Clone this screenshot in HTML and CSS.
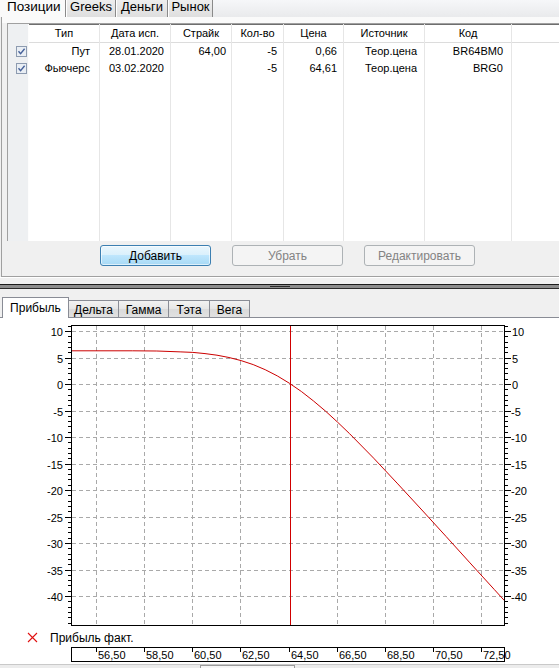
FILE: index.html
```html
<!DOCTYPE html>
<html lang="ru">
<head>
<meta charset="utf-8">
<title>Позиции</title>
<link rel="stylesheet" href="styles.css">
</head>
<body>
<div class="top-tabs">
  <div class="ttab active">Позиции</div>
  <div class="ttab w-greeks">Greeks</div>
  <div class="ttab w-money">Деньги</div>
  <div class="ttab w-market">Рынок</div>
</div>

<div class="panel">
  <div class="grid">
    <div class="col c-chk">
      <div class="hd"></div>
      <div class="cell"><svg class="chk" viewBox="0 0 11 11"><rect x="0.5" y="0.5" width="10" height="10" fill="#e9eef4" stroke="#8d9bb0"/><path d="M2.5 5.2 L4.6 7.6 L8.6 2.8" fill="none" stroke="#46619a" stroke-width="1.4"/></svg></div>
      <div class="cell"><svg class="chk" viewBox="0 0 11 11"><rect x="0.5" y="0.5" width="10" height="10" fill="#e9eef4" stroke="#8d9bb0"/><path d="M2.5 5.2 L4.6 7.6 L8.6 2.8" fill="none" stroke="#46619a" stroke-width="1.4"/></svg></div>
    </div>
    <div class="col c-type"><div class="hd">Тип</div><div class="cell">Пут</div><div class="cell">Фьючерс</div></div>
    <div class="col c-date"><div class="hd">Дата исп.</div><div class="cell">28.01.2020</div><div class="cell">03.02.2020</div></div>
    <div class="col c-strike"><div class="hd">Страйк</div><div class="cell">64,00</div><div class="cell"></div></div>
    <div class="col c-qty"><div class="hd">Кол-во</div><div class="cell">-5</div><div class="cell">-5</div></div>
    <div class="col c-price"><div class="hd">Цена</div><div class="cell">0,66</div><div class="cell">64,61</div></div>
    <div class="col c-src"><div class="hd">Источник</div><div class="cell">Теор.цена</div><div class="cell">Теор.цена</div></div>
    <div class="col c-code"><div class="hd">Код</div><div class="cell">BR64BM0</div><div class="cell">BRG0</div></div>
    <div class="col c-rest"><div class="hd"></div></div>
  </div>
  <div class="buttons">
    <button class="btn primary">Добавить</button>
    <button class="btn" disabled>Убрать</button>
    <button class="btn" disabled>Редактировать</button>
  </div>
</div>

<div class="splitter"><div class="bar"><span class="grip"></span></div></div>

<div class="btabs">
  <div class="btab active w-profit">Прибыль</div>
  <div class="btab w-delta">Дельта</div>
  <div class="btab w-gamma">Гамма</div>
  <div class="btab w-theta">Тэта</div>
  <div class="btab w-vega">Вега</div>
</div>

<div class="chart">
  <svg class="plot" width="559" height="346" viewBox="0 0 559 346">
    <defs>
      <g id="ticks">
        <path d="M65 13.5H71M65 40.5H71M65 66.5H71M65 93.5H71M65 119.5H71M65 146.5H71M65 172.5H71M65 199.5H71M65 225.5H71M65 252.5H71M65 278.5H71" stroke="#000"/>
        <path d="M68 8.5H71M68 18.5H71M68 24.5H71M68 29.5H71M68 34.5H71M68 45.5H71M68 50.5H71M68 55.5H71M68 61.5H71M68 71.5H71M68 77.5H71M68 82.5H71M68 87.5H71M68 98.5H71M68 103.5H71M68 108.5H71M68 114.5H71M68 124.5H71M68 130.5H71M68 135.5H71M68 140.5H71M68 151.5H71M68 156.5H71M68 161.5H71M68 167.5H71M68 177.5H71M68 183.5H71M68 188.5H71M68 193.5H71M68 204.5H71M68 209.5H71M68 214.5H71M68 220.5H71M68 230.5H71M68 236.5H71M68 241.5H71M68 246.5H71M68 257.5H71M68 262.5H71M68 267.5H71M68 273.5H71M68 283.5H71M68 289.5H71M68 294.5H71M68 299.5H71M68 305.5H71" stroke="#000"/>
      </g>
    </defs>
    <rect x="71.5" y="7.5" width="433" height="300" fill="#fff"/>
    <path class="grid-line" d="M72 13.5H504M72 40.5H504M72 66.5H504M72 93.5H504M72 119.5H504M72 146.5H504M72 172.5H504M72 199.5H504M72 225.5H504M72 252.5H504M72 278.5H504"/>
    <path class="grid-line" d="M96.5 8V307M144.5 8V307M192.5 8V307M240.5 8V307M337.5 8V307M385.5 8V307M433.5 8V307M481.5 8V307"/>
    <path class="red-line" d="M290.5 8V307"/>
    <polyline class="curve" points="72,32.8 132.7,32.8 156.8,33.0 180.9,33.9 192.9,34.4 205,35.6 217,37.2 229,39.5 241.1,42.6 253.2,46.6 265.2,51.7 277.3,57.9 289.3,65.2 301.4,73.5 313.4,82.9 325.5,93.1 337.5,104.1 349.6,115.7 373.7,140.2 397.8,165.9 421.9,192 446,218.4 470,244.9 494.2,271.4 504.5,282.7"/>
    <rect x="71.5" y="7.5" width="433" height="300" fill="none" stroke="#000"/>
    <use href="#ticks"/>
    <use href="#ticks" transform="translate(576 0) scale(-1 1)"/>
    <g class="lbl-left">
      <text x="63" y="17.5">10</text>
      <text x="63" y="44.5">5</text>
      <text x="63" y="70.5">0</text>
      <text x="63" y="97.5">-5</text>
      <text x="63" y="123.5">-10</text>
      <text x="63" y="150.5">-15</text>
      <text x="63" y="176.5">-20</text>
      <text x="63" y="203.5">-25</text>
      <text x="63" y="229.5">-30</text>
      <text x="63" y="256.5">-35</text>
      <text x="63" y="282.5">-40</text>
    </g>
    <g class="lbl-right">
      <text x="512" y="17.5">10</text>
      <text x="512" y="44.5">5</text>
      <text x="512" y="70.5">0</text>
      <text x="511" y="97.5">-5</text>
      <text x="511" y="123.5">-10</text>
      <text x="511" y="150.5">-15</text>
      <text x="511" y="176.5">-20</text>
      <text x="511" y="203.5">-25</text>
      <text x="511" y="229.5">-30</text>
      <text x="511" y="256.5">-35</text>
      <text x="511" y="282.5">-40</text>
    </g>
    <path class="legend-mark" d="M28 315L37 324M37 315L28 324"/>
    <text class="legend" x="50" y="323.5">Прибыль факт.</text>
    <rect x="71.5" y="329.5" width="433" height="14" fill="#fff" stroke="#000"/>
    <path d="M96.5 330V334M144.5 330V334M192.5 330V334M240.5 330V334M289.5 330V334M337.5 330V334M385.5 330V334M433.5 330V334M481.5 330V334" stroke="#000"/>
    <g class="lbl-x">
      <text x="98" y="341">56,50</text>
      <text x="146" y="341">58,50</text>
      <text x="194" y="341">60,50</text>
      <text x="242" y="341">62,50</text>
      <text x="291" y="341">64,50</text>
      <text x="339" y="341">66,50</text>
      <text x="387" y="341">68,50</text>
      <text x="435" y="341">70,50</text>
      <text x="483" y="341">72,50</text>
    </g>
  </svg>
</div>
<div class="hscroll"><span class="thumb"></span></div>
</body>
</html>
```

FILE: styles.css
```css
* { box-sizing: border-box; }
html, body { margin: 0; padding: 0; }
body {
  width: 559px;
  height: 668px;
  overflow: hidden;
  background: #f0f0f0;
  font-family: "Liberation Sans", Arial, sans-serif;
  font-size: 11px;
  color: #000;
}

/* ---------- top tabs ---------- */
.top-tabs {
  display: flex;
  height: 17px;
  background: linear-gradient(#f6f7f9, #e9eaec);
}
.ttab {
  height: 17px;
  font-size: 13px;
  line-height: 14px;
  text-align: center;
  background: linear-gradient(#eeeeee, #dedede);
  border-left: 1px solid #fff;
  border-right: 1px solid #8a8a8a;
  white-space: nowrap;
}
.ttab.active {
  width: 66px;
  background: #fafafa;
  text-align: left;
  padding-left: 7px;
  border-left: 0;
  font-size: 13.5px;
}
.w-greeks { width: 50px; }
.w-money { width: 52px; }
.w-market { width: 45px; }

/* ---------- positions panel ---------- */
.panel {
  height: 260px;
  margin-left: 1px;
  padding: 6px 0 10px 5px;
  border-left: 1px solid #a0a0a0;
  border-bottom: 1px solid #a0a0a0;
  background: linear-gradient(#fafafa 6px, #f0f0f0 6px);
  overflow: hidden;
}
.grid {
  display: flex;
  height: 218px;
  background: #fff;
  border-top: 1px solid #a0a0a0;
  border-left: 1px solid #a0a0a0;
  box-shadow: inset 1px 1px 0 #6e6e6e;
}
.col {
  flex: none;
  border-right: 1px solid #e6e6e6;
}
.hd {
  height: 19px;
  line-height: 19px;
  text-align: center;
  border-bottom: 1px solid #dcdcdc;
  white-space: nowrap;
}
.cell {
  height: 17px;
  line-height: 17px;
  text-align: right;
  padding-right: 6px;
  white-space: nowrap;
}
.c-chk { width: 21px; background: #eef0f2; border-right: 1px solid #fdfdfd; }
.c-chk .hd { background: #eef0f2; border-bottom-color: #eef0f2; }
.c-chk .cell { padding: 3px 0 0 8px; line-height: 0; }
.chk { width: 11px; height: 11px; display: block; }
.c-type { width: 71px; }
.c-type .cell { padding-right: 9px; }
.c-date { width: 71px; }
.c-strike { width: 61px; }
.c-strike .cell { padding-right: 5px; }
.c-qty { width: 52px; }
.c-price { width: 60px; }
.c-src { width: 81px; }
.c-src .cell { padding-right: 7px; }
.c-code { width: 87px; }
.c-code .cell { padding-right: 8px; }
.c-rest { flex: 1; border-right: 0; }

.buttons {
  display: flex;
  gap: 21px;
  margin-top: 4px;
  padding-left: 93px;
}
.btn {
  width: 111px;
  height: 21px;
  padding: 0;
  font-family: "Liberation Sans", Arial, sans-serif;
  font-size: 12px;
  color: #838383;
  background: #f4f4f4;
  border: 1px solid #adb2b5;
  border-radius: 3px;
}
.btn.primary {
  color: #000;
  border-color: #3c7fb1;
  background: linear-gradient(#eaf6fd, #d9f0fc 50%, #bee6fd 50%, #a7d9f5);
  box-shadow: inset 0 0 0 1px rgba(255,255,255,0.6);
}

/* ---------- splitter ---------- */
.splitter {
  height: 13px;
  padding-top: 6px;
  border-top: 1px solid #fff;
}
.bar {
  height: 5px;
  background: #8c8c8c;
  border-top: 1px solid #1a1a1a;
  border-bottom: 1px solid #2a2a2a;
  display: flex;
  justify-content: center;
}
.grip {
  width: 20px;
  height: 1px;
  margin-top: 1px;
  background: #2a2a2a;
}

/* ---------- bottom tabs ---------- */
.btabs {
  height: 28px;
  padding: 7px 0 0 2px;
  display: flex;
  align-items: flex-end;
  border-bottom: 1px solid #898c95;
}
.btab {
  height: 17px;
  font-size: 12px;
  line-height: 14px;
  padding-top: 2px;
  text-align: center;
  white-space: nowrap;
  border: 1px solid #898c95;
  border-bottom: 0;
  margin-left: -1px;
  background: linear-gradient(#f2f2f2, #e6e6e6 48%, #dadada 52%, #e1e1e1);
}
.btab.active {
  height: 21px;
  margin-left: 0;
  margin-bottom: -1px;
  padding-top: 3px;
  background: #fff;
  position: relative;
  z-index: 1;
}
.w-profit { width: 67px; }
.w-delta { width: 51px; }
.w-gamma { width: 51px; }
.w-theta { width: 42px; }
.w-vega { width: 41px; }

/* ---------- chart ---------- */
.chart {
  height: 346px;
  background: #fff;
}
.plot { display: block; }
.grid-line {
  fill: none;
  stroke: #a9a9a9;
  stroke-width: 1;
  stroke-dasharray: 4 3;
}
.red-line {
  fill: none;
  stroke: #d00000;
  stroke-width: 1;
  shape-rendering: crispEdges;
}
.curve {
  fill: none;
  stroke: #cc0000;
  stroke-width: 1;
}
.legend-mark {
  fill: none;
  stroke: #e01010;
  stroke-width: 1.1;
}
.plot text {
  font-family: "Liberation Sans", Arial, sans-serif;
  font-size: 11px;
  fill: #000;
}
.lbl-left text { text-anchor: end; }
.plot .legend { font-size: 12px; }

.hscroll {
  height: 4px;
  background: #ececec;
  border-top: 1px solid #c9c9c9;
}
.thumb {
  display: block;
  width: 95px;
  height: 3px;
  margin-left: 200px;
  background: #f7f7f7;
  border: 1px solid #9b9b9b;
  border-bottom: 0;
}
```
